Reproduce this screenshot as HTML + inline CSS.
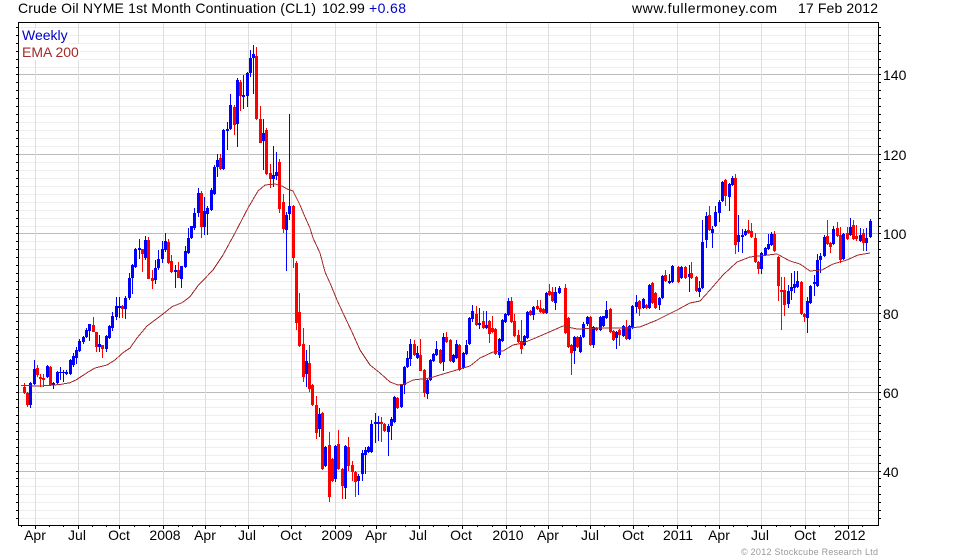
<!DOCTYPE html>
<html><head><meta charset="utf-8"><style>
html,body{margin:0;padding:0;background:#fff}
svg{display:block}
text{font-family:"Liberation Sans",sans-serif;font-size:14px}
</style></head><body>
<svg width="960" height="560" viewBox="0 0 960 560" xmlns="http://www.w3.org/2000/svg">
<rect width="960" height="560" fill="#fff"/>
<g shape-rendering="crispEdges" fill="none" transform="translate(0,.5)">
<path stroke="#eeeeee" d="M19 27H878M19 35H878M19 43H878M19 51H878M19 59H878M19 67H878M19 82H878M19 90H878M19 98H878M19 106H878M19 114H878M19 122H878M19 130H878M19 138H878M19 146H878M19 162H878M19 170H878M19 178H878M19 186H878M19 194H878M19 202H878M19 210H878M19 218H878M19 226H878M19 241H878M19 249H878M19 257H878M19 265H878M19 273H878M19 281H878M19 289H878M19 297H878M19 305H878M19 321H878M19 329H878M19 337H878M19 345H878M19 353H878M19 361H878M19 369H878M19 377H878M19 385H878M19 399H878M19 407H878M19 415H878M19 423H878M19 431H878M19 439H878M19 447H878M19 455H878M19 463H878M19 478H878M19 486H878M19 494H878M19 502H878M19 510H878M19 518H878"/>
<path stroke="#bbbbbb" d="M19 74H878M19 154H878M19 233H878M19 313H878M19 392H878M19 471H878"/>
</g>
<g shape-rendering="crispEdges" fill="none" transform="translate(.5,0)">
<path stroke="#dddddd" d="M35 23V525M78 23V525M119 23V525M163 23V525M205 23V525M248 23V525M291 23V525M335 23V525M376 23V525M419 23V525M462 23V525M506 23V525M548 23V525M590 23V525M633 23V525M677 23V525M719 23V525M761 23V525M805 23V525M848 23V525"/>
</g>
<rect x="20" y="28" width="49" height="16" fill="#fff"/>
<rect x="20" y="44" width="60" height="16" fill="#fff"/>
<g shape-rendering="crispEdges" fill="none" transform="translate(.5,0)">
<path stroke="#0000ff" stroke-width="1" d="M30 382V408M34 360V385M47 365V378M53 382V389M57 371V384M60 367V380M63 370V382M66 370V375M70 359V375M73 353V367M76 347V364M79 339V352M83 336V344M86 328V338M89 324V341M99 335V352M106 335V352M109 325V339M112 312V331M116 297V320M119 297V318M125 296V319M129 273V300M132 264V294M135 248V268M139 239V259M145 236V260M155 260V284M158 250V270M162 241V263M165 233V252M175 265V288M181 266V288M185 246V268M188 228V254M191 226V239M194 208V230M198 188V217M204 197V235M207 206V235M211 188V211M214 165V195M217 154V177M223 129V170M227 122V150M230 94V130M237 78V147M243 75V109M247 72V107M250 50V77M253 45V94M263 119V170M273 146V187M276 152V180M286 212V271M289 114V220M306 350V387M319 408V437M325 446V467M335 445V482M345 445V499M358 474V495M362 450V481M365 447V474M368 446V453M371 420V453M375 413V443M378 416V441M388 424V456M391 417V440M394 396V423M401 384V408M404 366V394M407 351V368M410 339V366M417 346V359M427 379V399M430 359V381M433 353V362M436 341V356M443 333V371M453 354V363M456 340V359M463 352V369M466 340V355M469 317V345M472 305V322M479 308V329M486 311V329M499 338V358M502 319V342M505 313V323M508 298V316M524 335V346M527 311V339M533 306V320M546 292V314M555 287V310M559 286V294M574 336V364M580 335V353M583 322V338M587 316V326M593 326V348M600 316V331M603 316V327M606 301V319M616 331V349M623 325V337M629 325V340M632 305V329M636 295V313M643 298V309M649 284V309M659 297V310M662 275V299M669 274V284M672 265V283M681 266V279M689 265V292M699 281V297M702 220V289M706 212V248M712 226V248M715 206V227M719 200V222M722 181V202M729 183V211M732 176V186M738 215V252M742 229V253M745 229V236M761 252V274M765 247V256M768 234V250M771 232V246M788 285V308M791 273V300M794 271V293M797 271V288M807 297V333M810 285V304M814 275V296M817 254V287M820 253V273M824 235V257M833 226V245M843 233V260M850 218V236M860 228V242M866 228V251M870 219V238"/>
<path stroke="#0000ff" stroke-width="3" d="M30 383V405M34 369V384M47 366V377M53 383V385M57 372V383M60 372V373M63 372V373M66 372V374M70 360V374M73 356V365M76 350V358M79 341V351M83 337V342M86 330V337M89 324V331M99 344V347M106 336V349M109 326V338M112 316V328M116 306V317M119 306V308M125 298V309M129 278V298M132 265V278M135 249V267M139 248V250M145 240V258M155 268V280M158 259V268M162 249V259M165 241V250M175 270V272M181 266V279M185 251V267M188 238V253M191 226V238M194 213V228M198 193V213M204 211V227M207 208V214M211 190V210M214 167V194M217 160V167M223 130V169M227 129V131M230 105V129M237 80V124M243 95V97M247 73V96M250 58V73M253 54V58M263 133V141M273 175V179M276 172V176M286 215V230M289 206V214M306 361V374M319 414V429M325 447V466M335 446V479M345 446V488M358 476V481M362 453V474M365 450V455M368 447V452M371 424V452M375 422V424M378 422V424M388 426V432M391 419V426M394 397V422M401 385V407M404 367V385M407 358V367M410 344V359M417 353V358M427 380V394M430 360V380M433 354V361M436 349V355M443 337V362M453 355V362M456 344V358M463 353V368M466 345V354M469 318V344M472 311V319M479 323V325M486 325V328M499 339V355M502 320V341M505 314V322M508 301V315M524 336V345M527 312V338M533 307V315M546 293V313M555 292V303M559 288V293M574 337V351M580 337V352M583 324V337M587 317V324M593 327V345M600 317V330M603 316V326M606 310V318M616 332V338M623 326V336M629 326V339M632 306V328M636 302V307M643 299V308M649 285V308M659 298V305M662 276V298M669 281V283M672 266V282M681 267V278M689 274V277M699 288V292M702 242V288M706 216V240M712 229V233M715 212V226M719 202V213M722 182V201M729 184V197M732 178V185M738 235V242M742 235V237M745 231V235M761 253V269M765 248V255M768 244V249M771 234V245M788 291V304M791 287V291M794 284V288M797 281V287M807 301V318M810 286V303M814 282V284M817 260V286M820 256V260M824 237V256M833 229V244M843 234V259M850 227V235M860 235V241M866 238V243M870 221V237"/>
<path stroke="#ff0000" stroke-width="1" d="M24 383V394M27 392V407M37 365V377M40 374V387M43 374V387M50 366V386M93 317V332M96 332V352M102 345V358M122 305V318M142 249V272M148 237V279M152 270V289M168 239V264M171 255V273M178 262V278M201 191V238M220 154V170M234 105V135M240 80V111M256 47V120M260 106V143M266 128V175M270 164V188M279 159V213M283 194V233M293 205V268M296 261V330M299 293V347M303 328V382M309 345V392M312 384V406M316 396V439M322 412V470M329 432V502M332 458V482M338 430V470M342 468V499M348 437V471M352 461V481M355 471V497M381 417V442M384 423V432M397 397V409M414 340V356M420 339V371M424 369V397M440 349V364M446 332V343M450 339V362M459 344V371M476 306V326M483 311V329M489 320V343M492 316V333M495 328V355M511 297V323M514 314V337M518 330V343M521 320V354M530 310V316M537 300V310M540 300V313M543 308V314M549 284V296M552 287V302M565 284V334M568 317V348M571 344V375M577 336V348M590 316V346M596 327V331M610 308V333M613 330V341M619 329V346M626 320V340M639 300V316M646 304V309M652 282V304M655 292V309M665 270V282M678 266V283M685 266V279M691 262V279M696 276V292M709 206V231M725 179V206M735 174V254M748 220V234M751 223V238M755 233V263M758 261V274M774 231V252M778 256V301M781 277V330M784 277V316M801 281V315M804 313V322M827 220V245M830 242V253M837 222V237M840 227V263M847 227V240M853 220V240M856 225V241M863 229V251"/>
<path stroke="#ff0000" stroke-width="3" d="M24 387V393M27 393V405M37 368V375M40 377V379M43 378V380M50 367V385M93 325V332M96 332V347M102 345V349M122 306V309M142 249V254M148 240V279M152 278V281M168 242V263M171 261V272M178 270V278M201 193V227M220 158V169M234 107V125M240 82V96M256 56V119M260 119V143M266 130V174M270 173V179M279 162V209M283 202V229M293 206V258M296 263V323M299 312V346M303 344V377M309 363V389M312 385V405M316 405V433M322 413V469M329 445V497M332 459V481M338 444V469M342 469V486M348 447V466M352 465V472M355 472V482M381 422V424M384 424V431M397 398V408M414 344V355M420 355V371M424 370V393M440 350V363M446 337V342M450 340V361M459 345V370M476 314V325M483 321V328M489 321V334M492 328V332M495 329V354M511 301V322M514 321V336M518 335V342M521 341V349M530 311V315M537 306V309M540 308V312M543 309V313M549 291V295M552 292V301M565 288V333M568 318V347M571 345V353M577 337V347M590 317V345M596 328V330M610 309V332M613 331V340M619 330V335M626 327V339M639 301V309M646 305V308M652 283V303M655 293V308M665 275V281M678 267V282M685 267V278M691 273V278M696 277V291M709 215V230M725 180V196M735 178V245M748 230V233M751 231V237M755 238V262M758 262V269M774 234V251M778 257V286M781 290V292M784 290V305M801 282V314M804 314V317M827 236V244M830 243V247M837 228V236M840 235V260M847 233V239M853 225V239M856 236V239M863 233V243"/>
</g>
<polyline shape-rendering="crispEdges" fill="none" stroke="#a52a2a" stroke-width="1" points="21,385.5 40,386 60,384.5 70,382.7 76,380 87,372.7 95,368 107,365 115,360 123,352.7 130,348 137,338 147,326 155,320 163,314 172,306.7 182,302.7 190,296.7 198,285.7 213,270 223,255 235,233 248,208 258,191 265,185 275,184 282,186 287,189 293,191 300,205 305,217 310,228 313,238 320,253 325,272 330,283 337,300 343,313 352,332 360,350 370,365 380,373 390,382 398,385 405,384 413,380 430,378 443,374 460,369 470,366 480,358 493,352 503,351 513,345 523,343 533,339 547,333 563,326 577,329 600,328 627,328 640,327 657,320 677,310 690,303 700,301 710,290 723,275 737,262 750,257 777,254 790,261 800,264 810,271 822,270 833,264 847,260 858,255 870,253"/>
<g shape-rendering="crispEdges" fill="none" stroke="#000">
<path transform="translate(0,.5)" d="M16 27H18M16 35H18M16 43H18M16 51H18M16 59H18M16 67H18M16 74H18M16 82H18M16 90H18M16 98H18M16 106H18M16 114H18M16 122H18M16 130H18M16 138H18M16 146H18M16 154H18M16 162H18M16 170H18M16 178H18M16 186H18M16 194H18M16 202H18M16 210H18M16 218H18M16 226H18M16 233H18M16 241H18M16 249H18M16 257H18M16 265H18M16 273H18M16 281H18M16 289H18M16 297H18M16 305H18M16 313H18M16 321H18M16 329H18M16 337H18M16 345H18M16 353H18M16 361H18M16 369H18M16 377H18M16 385H18M16 392H18M16 399H18M16 407H18M16 415H18M16 423H18M16 431H18M16 439H18M16 447H18M16 455H18M16 463H18M16 471H18M16 478H18M16 486H18M16 494H18M16 502H18M16 510H18M16 518H18"/>
<path transform="translate(0,.5)" d="M879 27H881M879 35H881M879 43H881M879 51H881M879 59H881M879 67H881M879 74H881M879 82H881M879 90H881M879 98H881M879 106H881M879 114H881M879 122H881M879 130H881M879 138H881M879 146H881M879 154H881M879 162H881M879 170H881M879 178H881M879 186H881M879 194H881M879 202H881M879 210H881M879 218H881M879 226H881M879 233H881M879 241H881M879 249H881M879 257H881M879 265H881M879 273H881M879 281H881M879 289H881M879 297H881M879 305H881M879 313H881M879 321H881M879 329H881M879 337H881M879 345H881M879 353H881M879 361H881M879 369H881M879 377H881M879 385H881M879 392H881M879 399H881M879 407H881M879 415H881M879 423H881M879 431H881M879 439H881M879 447H881M879 455H881M879 463H881M879 471H881M879 478H881M879 486H881M879 494H881M879 502H881M879 510H881M879 518H881"/>
<path transform="translate(.5,0)" d="M35 526V529M78 526V529M119 526V529M163 526V529M205 526V529M248 526V529M291 526V529M335 526V529M376 526V529M419 526V529M462 526V529M506 526V529M548 526V529M590 526V529M633 526V529M677 526V529M719 526V529M761 526V529M805 526V529M848 526V529M21 526V527M49 526V527M63 526V527M92 526V527M106 526V527M134 526V527M149 526V527M178 526V527M192 526V527M220 526V527M235 526V527M263 526V527M278 526V527M305 526V527M320 526V527M349 526V527M363 526V527M390 526V527M405 526V527M433 526V527M448 526V527M477 526V527M492 526V527M520 526V527M534 526V527M562 526V527M576 526V527M604 526V527M619 526V527M648 526V527M663 526V527M691 526V527M705 526V527M733 526V527M747 526V527M776 526V527M790 526V527M819 526V527M834 526V527M862 526V527"/>
<path transform="translate(.5,.5)" d="M18 22H878V525H18Z"/>
</g>
<text x="18" y="13" fill="#000" textLength="298" lengthAdjust="spacing">Crude Oil NYME 1st Month Continuation (CL1)</text>
<text x="322" y="13" fill="#000">102.99</text>
<text x="369" y="13" fill="#0000cc" textLength="37" lengthAdjust="spacing">+0.68</text>
<text x="632" y="13" fill="#000" textLength="145" lengthAdjust="spacing">www.fullermoney.com</text>
<text x="798" y="13" fill="#000" textLength="80" lengthAdjust="spacing">17 Feb 2012</text>
<text x="22" y="40" fill="#0000cc">Weekly</text>
<text x="22" y="57" fill="#a52a2a">EMA 200</text>
<g fill="#000">
<text x="883" y="80">140</text>
<text x="883" y="160">120</text>
<text x="883" y="239">100</text>
<text x="883" y="319">80</text>
<text x="883" y="398">60</text>
<text x="883" y="477">40</text>
</g>
<g fill="#000" text-anchor="middle">
<text x="35" y="540">Apr</text><text x="77" y="540">Jul</text><text x="119" y="540">Oct</text><text x="165" y="540">2008</text><text x="205" y="540">Apr</text><text x="247" y="540">Jul</text><text x="291" y="540">Oct</text><text x="337" y="540">2009</text><text x="376" y="540">Apr</text><text x="418" y="540">Jul</text><text x="461" y="540">Oct</text><text x="508" y="540">2010</text><text x="548" y="540">Apr</text><text x="590" y="540">Jul</text><text x="633" y="540">Oct</text><text x="678" y="540">2011</text><text x="719" y="540">Apr</text><text x="760" y="540">Jul</text><text x="805" y="540">Oct</text><text x="850" y="540">2012</text>
</g>
<text x="741" y="555" fill="#999999" style="font-size:9px" textLength="137" lengthAdjust="spacing">© 2012 Stockcube Research Ltd</text>
</svg>
</body></html>
